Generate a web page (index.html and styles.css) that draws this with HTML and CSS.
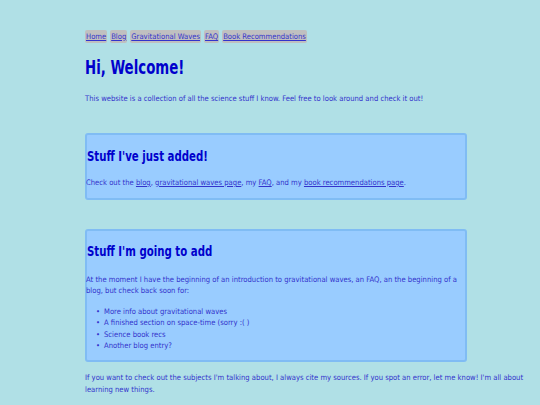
FILE: index.html
```html
<!DOCTYPE html>
<html>
<head>
<meta charset="utf-8">
<link rel="stylesheet" href="styles.css">
</head>
<body>
<div class="page">
  <nav class="nav">
    <a href="#">Home</a>
    <a href="#">Blog</a>
    <a href="#">Gravitational Waves</a>
    <a href="#">FAQ</a>
    <a href="#">Book Recommendations</a>
  </nav>
  <h1 class="title">Hi, Welcome!</h1>
  <p class="intro">This website is a collection of all the science stuff I know. Feel free to look around and check it out!</p>
  <section class="box box-first">
    <h2 class="box-title">Stuff I've just added!</h2>
    <p class="text">Check out the <a href="#">blog</a>, <a href="#">gravitational waves page</a>, my <a href="#">FAQ</a>, and my <a href="#">book recommendations page</a>.</p>
  </section>
  <section class="box box-second">
    <h2 class="box-title">Stuff I'm going to add</h2>
    <p class="text">At the moment I have the beginning of an introduction to gravitational waves, an FAQ, an the beginning of a blog, but check back soon for:</p>
    <ul class="list">
      <li>More info about gravitational waves</li>
      <li>A finished section on space-time (sorry :( )</li>
      <li>Science book recs</li>
      <li>Another blog entry?</li>
    </ul>
  </section>
  <p class="outro">If you want to check out the subjects I'm talking about, I always cite my sources. If you spot an error, let me know! I'm all about learning new things.</p>
</div>
</body>
</html>
```
FILE: styles.css
```css
html, body {
  margin: 0;
  padding: 0;
  background: #b0e0e6;
}
body {
  font-family: "DejaVu Sans Condensed", "DejaVu Sans", sans-serif;
  font-size: 7.6px;
  color: #3333cc;
}
.page {
  padding: 30px 12px 0 85px;
}
.nav {
  display: flex;
  gap: 3px;
  height: 13px;
}
.nav a {
  background: #c0c0c0;
  color: #3333cc;
  padding: 1px 1px;
  border-radius: 2px;
  line-height: 11px;
}
a {
  color: #3333cc;
}
.title {
  margin: 12px 0 0;
  font-size: 19px;
  line-height: 24px;
  color: #0000cc;
  transform: scaleX(0.78);
  transform-origin: left center;
}
.intro {
  margin: 14px 0 0;
  line-height: 11px;
}
.box {
  background: #99ccff;
  border: 2px solid #80bcf4;
  border-radius: 3px;
  box-sizing: border-box;
  width: 382px;
}
.box > * {
  margin-left: -1px;
}
.box-first {
  margin-top: 29px;
  padding: 11px 0 10px;
}
.box-second {
  margin-top: 29px;
  padding: 10px 0 9px;
}
.box-title {
  margin: 0;
  font-size: 14px;
  line-height: 20px;
  color: #0000cc;
  transform: scaleX(0.81);
  transform-origin: left center;
}
.box-first .text {
  margin: 11px 0 0 -1px;
  line-height: 11px;
}
.box-second .text {
  margin: 13px 0 0 -1px;
  line-height: 11px;
}
.list {
  margin: 10px 0 0;
  padding-left: 9px;
  list-style: none;
  line-height: 11.3px;
}
.list li::before {
  content: "\2022";
  display: inline-block;
  width: 8px;
}
.outro {
  margin: 10px 0 0;
  line-height: 12px;
}
```
